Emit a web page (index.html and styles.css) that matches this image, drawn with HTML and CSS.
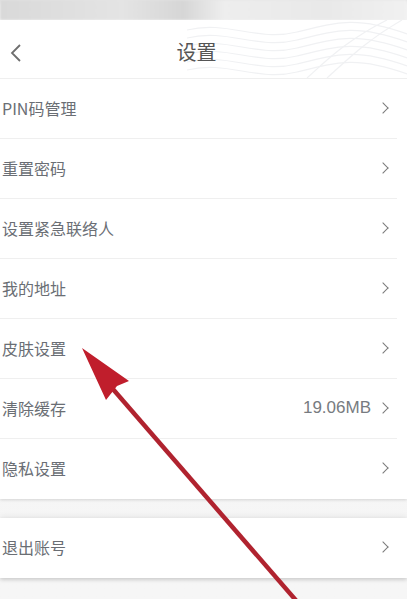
FILE: index.html
```html
<!DOCTYPE html>
<html lang="zh-CN">

<head>
  <meta charset="UTF-8" />
  <meta name="viewport" content="width=device-width, initial-scale=1" />
  <title>设置</title>
  <link rel="stylesheet" href="styles.css">
</head>

<body>

  <div class="status-bar"></div>

  <header class="top-bar">
    <svg class="waves" width="220" height="58" viewBox="0 0 220 58">
      <path d="M0 10 C40 0 70 22 110 12 S170 -4 220 14" />
      <path d="M0 18 C40 8 70 30 110 20 S170 4 220 22" />
      <path d="M0 26 C40 16 70 38 110 28 S170 12 220 30" />
      <path d="M0 34 C40 24 70 46 110 36 S170 20 220 38" />
      <path d="M0 42 C40 32 70 54 110 44 S170 28 220 46" />
      <path d="M0 50 C40 40 70 62 110 52 S170 36 220 54" />
      <path d="M120 58 C140 40 160 20 200 0" />
      <path d="M140 58 C160 40 180 20 215 0" />
    </svg>
    <svg class="back" width="14" height="20" viewBox="0 0 14 20">
      <path d="M11 2 L3 10 L11 18" />
    </svg>
    <h1 class="title">设置</h1>
  </header>

  <section class="menu">
    <div class="menu-item"><span>PIN码管理</span><i class="chev"></i></div>
    <div class="menu-item"><span>重置密码</span><i class="chev"></i></div>
    <div class="menu-item"><span>设置紧急联络人</span><i class="chev"></i></div>
    <div class="menu-item"><span>我的地址</span><i class="chev"></i></div>
    <div class="menu-item"><span>皮肤设置</span><i class="chev"></i></div>
    <div class="menu-item"><span>清除缓存</span><span class="extra">19.06MB<i class="chev"></i></span></div>
    <div class="menu-item"><span>隐私设置</span><i class="chev"></i></div>
  </section>

  <section class="menu logout">
    <div class="menu-item"><span>退出账号</span><i class="chev"></i></div>
  </section>

  <!-- 标注箭头 -->
  <svg class="pointer" width="407" height="599" viewBox="0 0 407 599">
    <line x1="112" y1="388" x2="300" y2="605" stroke="#b0232f" stroke-width="4.5" />
    <path d="M82 348 L129 381 L117 386 L106 400 Z" fill="#c01e2c" />
  </svg>

</body>

</html>
```

FILE: styles.css
```css
body {
  margin: 0;
  width: 407px;
  height: 599px;
  overflow: hidden;
  position: relative;
  background: linear-gradient(#e2e2e2, #f4f4f4 6px, #f6f6f6);
  font-family: "Noto Sans CJK SC", "Noto Sans", sans-serif;
  color: #6a6e74;
}

.status-bar {
  height: 20px;
  background: linear-gradient(90deg, #d9d9d9 0%, #e4e4e4 30%, #d6d6d6 45%, #eeeeee 55%, #e9e9e9 80%, #f1f1f1 100%);
  filter: blur(1px);
}

.top-bar {
  position: relative;
  height: 58px;
  background: #fff;
  border-bottom: 1px solid #efefef;
  display: flex;
  align-items: center;
  justify-content: center;
}

.waves {
  position: absolute;
  right: 0;
  top: 0;
  fill: none;
  stroke: #f0f1f3;
  stroke-width: 1.2;
}

.back {
  position: absolute;
  left: 9px;
  top: 23px;
  fill: none;
  stroke: #6e6e6e;
  stroke-width: 1.8;
}

.title {
  margin: 0;
  font-size: 20px;
  font-weight: 400;
  color: #555;
  position: relative;
  left: -7px;
  top: 2px;
}

.menu {
  background: #fff;
  padding-right: 10px;
  box-shadow: 0 1px 3px rgba(0, 0, 0, 0.14);
}

.menu-item {
  height: 57px;
  border-bottom: 1px solid #efefef;
  display: flex;
  align-items: center;
  justify-content: space-between;
  padding: 0 7px 2px 2px;
  font-size: 16px;
}

.menu-item:last-child {
  border-bottom: none;
  height: 58px;
}

.extra {
  display: flex;
  align-items: center;
  gap: 8px;
  font-family: "Liberation Sans", sans-serif;
  font-size: 17px;
  color: #777b80;
}

.chev {
  width: 7px;
  height: 7px;
  border-right: 1.7px solid #7a7a7a;
  border-top: 1.7px solid #7a7a7a;
  transform: rotate(45deg);
  margin-right: 3px;
}

.logout {
  margin-top: 19px;
  box-shadow: 0 -2px 6px rgba(0, 0, 0, 0.06), 0 2px 4px rgba(0, 0, 0, 0.16);
}

.pointer {
  position: absolute;
  left: 0;
  top: 0;
}
```
